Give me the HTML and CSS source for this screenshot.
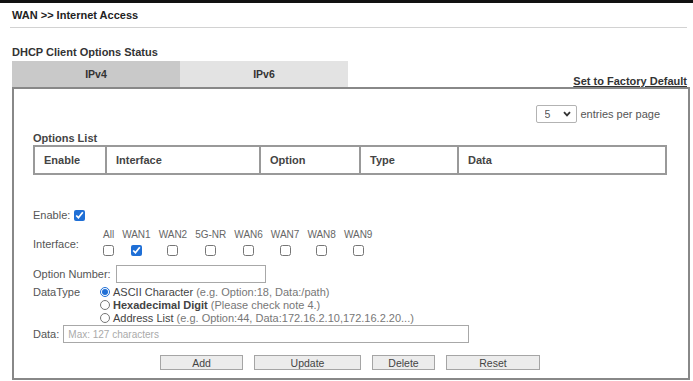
FILE: index.html
```html
<!DOCTYPE html>
<html lang="en">
<head>
    <meta charset="UTF-8">
    <meta name="viewport" content="width=device-width, initial-scale=1.0">
    <title>WAN - Internet Access</title>
    <link rel="stylesheet" href="styles.css">
</head>
<body>
  <div class="topbar"></div>
  <div class="page">
    <h1 class="title">WAN &gt;&gt; Internet Access</h1>
    <hr class="rule">
    <h2 class="section">DHCP Client Options Status</h2>

    <div class="tabs-row">
      <div class="tab tab-active">IPv4</div>
      <div class="tab">IPv6</div>
      <a class="factory" href="#">Set to Factory Default</a>
    </div>

    <div class="panel">
      <div class="pager">
        <span class="pick">
          <select class="pick-select">
            <option>5</option>
            <option>10</option>
            <option>20</option>
          </select>
          <svg class="pick-arrow" width="8" height="6" viewBox="0 0 8 6"><path d="M1 1.2 4 4.4 7 1.2" fill="none" stroke="#333" stroke-width="1.8"/></svg>
        </span>
        <span class="pager-text">entries per page</span>
      </div>

      <div class="list-title">Options List</div>
      <table class="options">
        <colgroup>
          <col style="width:72px">
          <col style="width:154px">
          <col style="width:100px">
          <col style="width:98px">
          <col>
        </colgroup>
        <tr>
          <th>Enable</th>
          <th>Interface</th>
          <th>Option</th>
          <th>Type</th>
          <th>Data</th>
        </tr>
      </table>

      <div class="form">
        <div class="row row-enable">
          <label class="lbl">Enable:</label>
          <input type="checkbox" class="check" checked>
        </div>

        <div class="row row-iface">
          <span class="lbl lbl-wide">Interface:</span>
          <table class="ifaces">
            <tr>
              <td>All</td><td>WAN1</td><td>WAN2</td><td>5G-NR</td>
              <td>WAN6</td><td>WAN7</td><td>WAN8</td><td>WAN9</td>
            </tr>
            <tr>
              <td><input type="checkbox" class="check"></td>
              <td><input type="checkbox" class="check" checked></td>
              <td><input type="checkbox" class="check"></td>
              <td><input type="checkbox" class="check"></td>
              <td><input type="checkbox" class="check"></td>
              <td><input type="checkbox" class="check"></td>
              <td><input type="checkbox" class="check"></td>
              <td><input type="checkbox" class="check"></td>
            </tr>
          </table>
        </div>

        <div class="row row-option">
          <label class="lbl">Option Number:</label>
          <input type="text" class="field field-num">
        </div>

        <div class="row row-type">
          <span class="lbl lbl-wide">DataType</span>
          <div class="radios">
            <label class="radio"><input type="radio" name="dtype" checked><span class="opt-name">ASCII Character</span> <span class="opt-hint">(e.g. Option:18, Data:/path)</span></label>
            <label class="radio"><input type="radio" name="dtype"><span class="opt-name opt-bold">Hexadecimal Digit</span> <span class="opt-hint">(Please check note 4.)</span></label>
            <label class="radio"><input type="radio" name="dtype"><span class="opt-name">Address List</span> <span class="opt-hint">(e.g. Option:44, Data:172.16.2.10,172.16.2.20...)</span></label>
          </div>
        </div>

        <div class="row row-data">
          <label class="lbl">Data:</label>
          <input type="text" class="field field-data" placeholder="Max: 127 characters">
        </div>

        <div class="actions">
          <button class="btn btn-add">Add</button>
          <button class="btn btn-update">Update</button>
          <button class="btn btn-delete">Delete</button>
          <button class="btn btn-reset">Reset</button>
        </div>
      </div>
    </div>
  </div>
</body>
</html>
```

FILE: styles.css
```css
* {
    margin: 0;
    padding: 0;
    box-sizing: border-box;
}
body {
    font-family: "Liberation Sans", Arial, sans-serif;
    font-size: 11px;
    color: #444;
    background: #fff;
}
.topbar {
    height: 3px;
    background: #111;
}
.page {
    padding: 0 3px 0 12px;
}
.title {
    margin-top: 5px;
    font-size: 11px;
    line-height: 14px;
    font-weight: bold;
    color: #222;
}
.rule {
    border: 0;
    border-top: 1px solid #d2d2d2;
    margin: 5px 3px 0 -2px;
}
.section {
    margin-top: 17px;
    font-size: 11px;
    line-height: 14px;
    font-weight: bold;
    color: #333;
}

/* tabs */
.tabs-row {
    display: flex;
    align-items: flex-end;
    margin-top: 2px;
    height: 26px;
}
.tab {
    width: 168px;
    height: 26px;
    line-height: 26px;
    text-align: center;
    font-weight: bold;
    font-size: 10.5px;
    color: #333;
    background: #e3e3e3;
}
.tab-active {
    background: #c9c9c9;
}
.factory {
    margin-left: auto;
    margin-right: 3px;
    line-height: 11px;
    font-weight: bold;
    color: #333;
    text-decoration: underline;
}

/* panel */
.panel {
    border: 2px solid #888;
    padding: 16px 21px 8px 19px;
}
.pager {
    display: flex;
    justify-content: flex-end;
    align-items: center;
    gap: 4px;
    padding-right: 7px;
    height: 18px;
}
.pick {
    position: relative;
    display: inline-block;
}
.pick-select {
    appearance: none;
    width: 41px;
    height: 18px;
    border: 1px solid #b3b3b3;
    border-radius: 2px;
    background: #fff;
    padding-left: 8px;
    font-family: inherit;
    font-size: 10.5px;
    color: #555;
}
.pick-arrow {
    position: absolute;
    right: 6px;
    top: 6px;
    pointer-events: none;
}
.pager-text {
    font-size: 11px;
    color: #555;
}
.list-title {
    margin-top: 9px;
    margin-bottom: 1px;
    line-height: 12px;
    font-weight: bold;
    color: #444;
}

.options {
    width: 634px;
    table-layout: fixed;
    border-collapse: collapse;
}
.options th {
    height: 28px;
    border: 2px solid #999;
    padding-left: 9px;
    text-align: left;
    font-size: 11px;
    color: #444;
}

/* form */
.row {
    display: flex;
    align-items: center;
}
.lbl {
    color: #555;
    white-space: nowrap;
}
.lbl-wide {
    width: 66px;
}
.check {
    width: 11px;
    height: 11px;
    margin: 0;
    accent-color: #1f6fd6;
}
.row-enable {
    margin-top: 32px;
    height: 16px;
    gap: 4px;
}
.row-iface {
    margin-top: 3px;
}
.row-iface .lbl {
    padding-top: 3px;
}
.ifaces {
    border-collapse: collapse;
}
.ifaces td {
    height: 16px;
    padding: 0 4px;
    text-align: center;
    font-size: 10px;
    color: #666;
}
.ifaces .check {
    display: block;
    margin: 0 auto;
}
.row-option {
    margin-top: 7px;
    gap: 5px;
}
.field {
    height: 18px;
    border: 1px solid #a8a8a8;
    padding: 0 4px;
    font-family: inherit;
    font-size: 10px;
    color: #444;
}
.field::placeholder {
    color: #aaa;
}
.field-num {
    width: 150px;
}
.row-type {
    margin-top: 3px;
    align-items: flex-start;
}
.row-type .lbl {
    line-height: 13px;
}
.radios {
    display: flex;
    flex-direction: column;
}
.radio {
    display: block;
    line-height: 13px;
    white-space: nowrap;
    color: #666;
}
.radio input {
    width: 10px;
    height: 10px;
    margin: 0 3px 0 1px;
    vertical-align: -1px;
    accent-color: #1f6fd6;
}
.opt-name {
    color: #444;
}
.opt-bold {
    font-weight: bold;
}
.opt-hint {
    color: #777;
}
.row-data {
    gap: 4px;
}
.field-data {
    width: 406px;
}

.actions {
    display: flex;
    justify-content: center;
    gap: 11px;
    margin-top: 12px;
}
.btn {
    height: 15px;
    border: 1px solid #a5a5a5;
    background: #ececec;
    font-family: inherit;
    font-size: 10.5px;
    color: #444;
}
.btn-add {
    width: 83px;
}
.btn-update {
    width: 107px;
}
.btn-delete {
    width: 63px;
}
.btn-reset {
    width: 94px;
}
```
